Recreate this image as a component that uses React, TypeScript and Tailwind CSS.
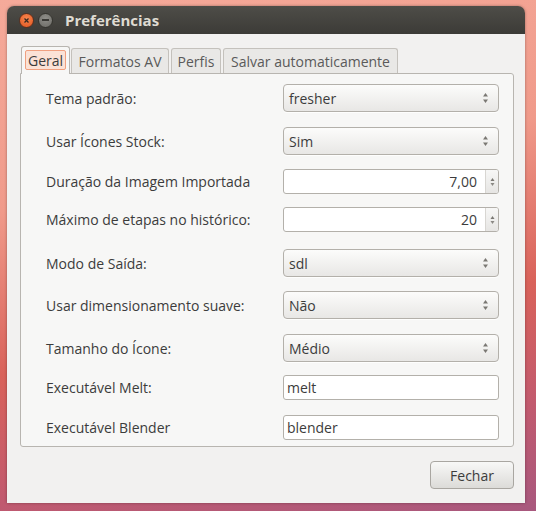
import React from "react";

const font = { fontFamily: '"Open Sans", "DejaVu Sans", sans-serif' };

function Arrows() {
  return (
    <svg width="7" height="12" viewBox="0 0 7 12" className="shrink-0">
      <path d="M3.5 1 L6 4.5 L1 4.5 Z" fill="#7a7873" />
      <path d="M3.5 11 L6 7.5 L1 7.5 Z" fill="#7a7873" />
    </svg>
  );
}

function Combo({ value }: { value: string }) {
  return (
    <div className="w-[216px] h-[28px] rounded-[4px] border border-[#b3b0aa] bg-gradient-to-b from-[#fcfcfb] to-[#e8e7e5] flex items-center pl-[5px] pr-[9px] shadow-[0_1px_0_rgba(255,255,255,0.8)]">
      <span className="flex-1 text-[#3c3c3c] text-[14px]">{value}</span>
      <Arrows />
    </div>
  );
}

function Spin({ value }: { value: string }) {
  return (
    <div className="w-[216px] h-[25px] rounded-[3px] border border-[#b3b0aa] bg-white flex items-stretch overflow-hidden">
      <span className="flex-1 text-right pr-[8px] text-[#3c3c3c] text-[14px] leading-[23px]">{value}</span>
      <div className="w-[13px] border-l border-[#d8d6d2] bg-gradient-to-b from-[#f7f7f6] to-[#e6e5e3] flex items-center justify-center">
        <svg width="5" height="12" viewBox="0 0 5 12">
          <path d="M2.5 2 L4.5 5 L0.5 5 Z" fill="#7a7873" />
          <path d="M2.5 10 L4.5 7 L0.5 7 Z" fill="#8a8883" />
        </svg>
      </div>
    </div>
  );
}

function Entry({ value }: { value: string }) {
  return (
    <div className="w-[216px] h-[25px] rounded-[3px] border border-[#b3b0aa] bg-white flex items-center pl-[3px] text-[#3c3c3c] text-[14px]">
      {value}
    </div>
  );
}

function Row({ label, h, children }: { label: string; h: string; children: React.ReactNode }) {
  return (
    <div className={`flex items-center ${h}`}>
      <span className="w-[237px] text-[14px] text-[#3c3c3c]">{label}</span>
      {children}
    </div>
  );
}

export default function App() {
  return (
    <div
      style={font}
      className="w-[536px] h-[511px] overflow-hidden bg-[linear-gradient(170deg,#f5aa9a_0%,#f09a8a_35%,#d9625a_62%,#c25a6e_82%,#a8587e_100%)] pt-[6px] pl-[7px]"
    >
      <div className="w-[518px] h-[497px] flex flex-col rounded-t-[7px] overflow-hidden shadow-[0_0_3px_rgba(0,0,0,0.35)]">
        {/* title bar */}
        <div className="h-[28px] bg-gradient-to-b from-[#4e4d48] to-[#3c3b37] flex items-center pl-[12px] shrink-0">
          <div className="w-[15px] h-[15px] rounded-full bg-[radial-gradient(circle_at_50%_35%,#f7874f,#e2541e)] border border-[#5a3020] flex items-center justify-center">
            <svg width="7" height="7" viewBox="0 0 7 7">
              <path d="M1.5 1.5 L5.5 5.5 M5.5 1.5 L1.5 5.5" stroke="#3a2a22" strokeWidth="1.3" />
            </svg>
          </div>
          <div className="ml-[4px] w-[15px] h-[15px] rounded-full bg-[radial-gradient(circle_at_50%_35%,#8f8e89,#6b6a65)] border border-[#35342f] flex items-center justify-center">
            <div className="w-[7px] h-[1.5px] bg-[#3a3935]" />
          </div>
          <span className="ml-[12px] text-[15px] font-bold text-[#dfdbd2]">Preferências</span>
        </div>
        {/* content */}
        <div className="flex-1 bg-[#f2f1f0] flex flex-col pl-[13px] pr-[11px] pt-[11px]">
          {/* tabs */}
          <div className="flex items-end h-[28px] pl-[1px]">
            <div className="h-[28px] w-[49px] border border-b-0 border-[#b8b5b0] rounded-t-[3px] bg-[#f7f7f6] flex items-center justify-center relative z-10 mb-[-1px] pb-[1px]">
              <span className="px-[2px] h-[20px] leading-[19px] rounded-[2px] border border-[#f0a080] bg-[#fbe2d6] text-[14px] text-[#3c3c3c]">Geral</span>
            </div>
            <div className="ml-[1px] h-[25px] w-[98px] border border-b-0 border-[#c4c1bc] rounded-t-[3px] bg-[#e9e8e6] flex items-center justify-center text-[14px] text-[#5a5a5a]">Formatos AV</div>
            <div className="ml-[2px] h-[25px] w-[50px] border border-b-0 border-[#c4c1bc] rounded-t-[3px] bg-[#e9e8e6] flex items-center justify-center text-[14px] text-[#5a5a5a]">Perfis</div>
            <div className="ml-[2px] h-[25px] w-[175px] border border-b-0 border-[#c4c1bc] rounded-t-[3px] bg-[#e9e8e6] flex items-center justify-center text-[14px] text-[#5a5a5a]">Salvar automaticamente</div>
          </div>
          {/* panel */}
          <div className="h-[374px] border border-[#b8b5b0] rounded-b-[3px] rounded-tr-[3px] bg-[#f7f7f6] pl-[25px] pt-[10px] flex flex-col">
            <Row label="Tema padrão:" h="h-[28px]"><Combo value="fresher" /></Row>
            <div className="h-[15px]" />
            <Row label="Usar Ícones Stock:" h="h-[28px]"><Combo value="Sim" /></Row>
            <div className="h-[14px]" />
            <Row label="Duração da Imagem Importada" h="h-[25px]"><Spin value="7,00" /></Row>
            <div className="h-[13px]" />
            <Row label="Máximo de etapas no histórico:" h="h-[25px]"><Spin value="20" /></Row>
            <div className="h-[17px]" />
            <Row label="Modo de Saída:" h="h-[28px]"><Combo value="sdl" /></Row>
            <div className="h-[14px]" />
            <Row label="Usar dimensionamento suave:" h="h-[28px]"><Combo value="Não" /></Row>
            <div className="h-[15px]" />
            <Row label="Tamanho do Ícone:" h="h-[28px]"><Combo value="Médio" /></Row>
            <div className="h-[13px]" />
            <Row label="Executável Melt:" h="h-[25px]"><Entry value="melt" /></Row>
            <div className="h-[15px]" />
            <Row label="Executável Blender" h="h-[25px]"><Entry value="blender" /></Row>
          </div>
          <div className="flex justify-end mt-[14px]">
            <div className="w-[84px] h-[28px] rounded-[4px] border border-[#a9a6a1] bg-gradient-to-b from-[#f8f8f7] to-[#dcdbd8] flex items-center justify-center text-[14px] text-[#3c3c3c]">
              Fechar
            </div>
          </div>
        </div>
      </div>
    </div>
  );
}
